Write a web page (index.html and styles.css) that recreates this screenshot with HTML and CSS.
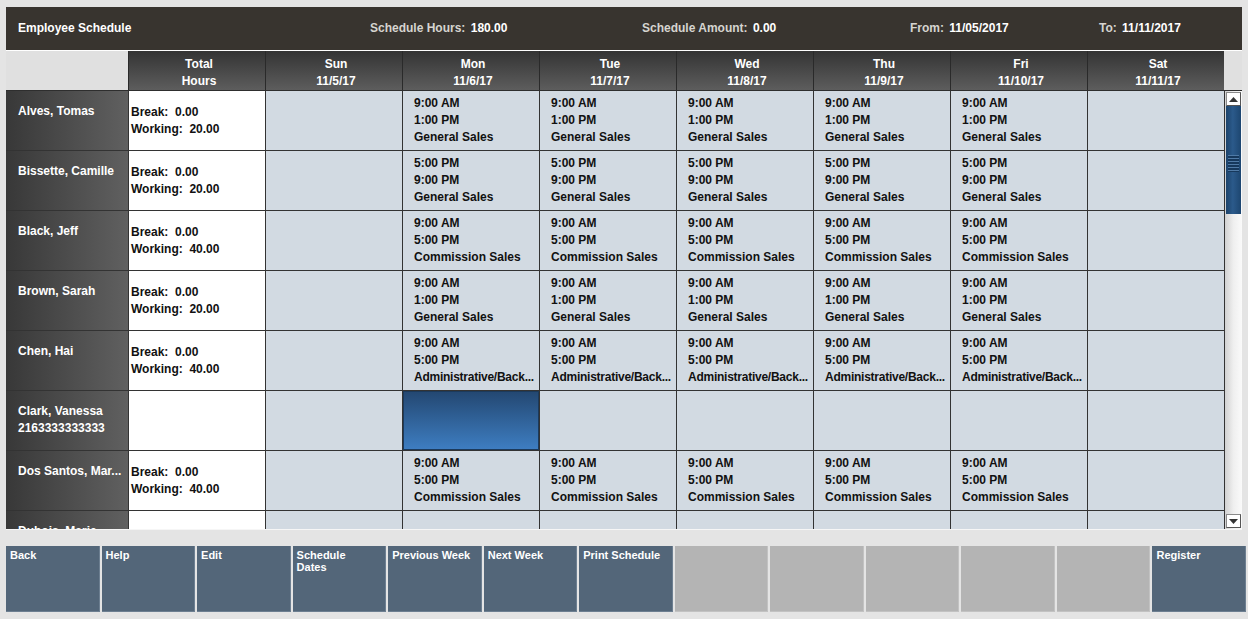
FILE: index.html
```html
<!DOCTYPE html>
<html>
<head>
  <title>Employee Schedule</title>
  <meta charset="UTF-8">
  <link rel="stylesheet" href="styles.css">
</head>
<body>
  <div class="screen">
    <div class="topbar">
      <div class="title">Employee Schedule</div>
      <div><span class="label">Schedule Hours:</span> <span class="value">180.00</span></div>
      <div><span class="label">Schedule Amount:</span> <span class="value">0.00</span></div>
      <div><span class="label">From:</span> <span class="value">11/05/2017</span></div>
      <div><span class="label">To:</span> <span class="value">11/11/2017</span></div>
    </div>

    <div class="grid">
      <div class="grid-head">
        <div class="corner"></div>
        <div class="colh">Total<br>Hours</div>
        <div class="colh">Sun<br>11/5/17</div>
        <div class="colh">Mon<br>11/6/17</div>
        <div class="colh">Tue<br>11/7/17</div>
        <div class="colh">Wed<br>11/8/17</div>
        <div class="colh">Thu<br>11/9/17</div>
        <div class="colh">Fri<br>11/10/17</div>
        <div class="colh">Sat<br>11/11/17</div>
        <div class="corner"></div>
      </div>

      <div class="grid-body">
        <div class="rows">
          <div class="row">
            <div class="name">Alves, Tomas</div>
            <div class="total"><div>Break:&nbsp; 0.00</div><div>Working:&nbsp; 20.00</div></div>
            <div class="day"></div>
            <div class="day"><div>9:00 AM</div><div>1:00 PM</div><div>General Sales</div></div>
            <div class="day"><div>9:00 AM</div><div>1:00 PM</div><div>General Sales</div></div>
            <div class="day"><div>9:00 AM</div><div>1:00 PM</div><div>General Sales</div></div>
            <div class="day"><div>9:00 AM</div><div>1:00 PM</div><div>General Sales</div></div>
            <div class="day"><div>9:00 AM</div><div>1:00 PM</div><div>General Sales</div></div>
            <div class="day"></div>
          </div>
          <div class="row">
            <div class="name">Bissette, Camille</div>
            <div class="total"><div>Break:&nbsp; 0.00</div><div>Working:&nbsp; 20.00</div></div>
            <div class="day"></div>
            <div class="day"><div>5:00 PM</div><div>9:00 PM</div><div>General Sales</div></div>
            <div class="day"><div>5:00 PM</div><div>9:00 PM</div><div>General Sales</div></div>
            <div class="day"><div>5:00 PM</div><div>9:00 PM</div><div>General Sales</div></div>
            <div class="day"><div>5:00 PM</div><div>9:00 PM</div><div>General Sales</div></div>
            <div class="day"><div>5:00 PM</div><div>9:00 PM</div><div>General Sales</div></div>
            <div class="day"></div>
          </div>
          <div class="row">
            <div class="name">Black, Jeff</div>
            <div class="total"><div>Break:&nbsp; 0.00</div><div>Working:&nbsp; 40.00</div></div>
            <div class="day"></div>
            <div class="day"><div>9:00 AM</div><div>5:00 PM</div><div>Commission Sales</div></div>
            <div class="day"><div>9:00 AM</div><div>5:00 PM</div><div>Commission Sales</div></div>
            <div class="day"><div>9:00 AM</div><div>5:00 PM</div><div>Commission Sales</div></div>
            <div class="day"><div>9:00 AM</div><div>5:00 PM</div><div>Commission Sales</div></div>
            <div class="day"><div>9:00 AM</div><div>5:00 PM</div><div>Commission Sales</div></div>
            <div class="day"></div>
          </div>
          <div class="row">
            <div class="name">Brown, Sarah</div>
            <div class="total"><div>Break:&nbsp; 0.00</div><div>Working:&nbsp; 20.00</div></div>
            <div class="day"></div>
            <div class="day"><div>9:00 AM</div><div>1:00 PM</div><div>General Sales</div></div>
            <div class="day"><div>9:00 AM</div><div>1:00 PM</div><div>General Sales</div></div>
            <div class="day"><div>9:00 AM</div><div>1:00 PM</div><div>General Sales</div></div>
            <div class="day"><div>9:00 AM</div><div>1:00 PM</div><div>General Sales</div></div>
            <div class="day"><div>9:00 AM</div><div>1:00 PM</div><div>General Sales</div></div>
            <div class="day"></div>
          </div>
          <div class="row">
            <div class="name">Chen, Hai</div>
            <div class="total"><div>Break:&nbsp; 0.00</div><div>Working:&nbsp; 40.00</div></div>
            <div class="day"></div>
            <div class="day"><div>9:00 AM</div><div>5:00 PM</div><div class="long">Administrative/Back...</div></div>
            <div class="day"><div>9:00 AM</div><div>5:00 PM</div><div class="long">Administrative/Back...</div></div>
            <div class="day"><div>9:00 AM</div><div>5:00 PM</div><div class="long">Administrative/Back...</div></div>
            <div class="day"><div>9:00 AM</div><div>5:00 PM</div><div class="long">Administrative/Back...</div></div>
            <div class="day"><div>9:00 AM</div><div>5:00 PM</div><div class="long">Administrative/Back...</div></div>
            <div class="day"></div>
          </div>
          <div class="row">
            <div class="name">Clark, Vanessa<br>2163333333333</div>
            <div class="total"></div>
            <div class="day"></div>
            <div class="day sel"></div>
            <div class="day"></div>
            <div class="day"></div>
            <div class="day"></div>
            <div class="day"></div>
            <div class="day"></div>
          </div>
          <div class="row">
            <div class="name">Dos Santos, Mar...</div>
            <div class="total"><div>Break:&nbsp; 0.00</div><div>Working:&nbsp; 40.00</div></div>
            <div class="day"></div>
            <div class="day"><div>9:00 AM</div><div>5:00 PM</div><div>Commission Sales</div></div>
            <div class="day"><div>9:00 AM</div><div>5:00 PM</div><div>Commission Sales</div></div>
            <div class="day"><div>9:00 AM</div><div>5:00 PM</div><div>Commission Sales</div></div>
            <div class="day"><div>9:00 AM</div><div>5:00 PM</div><div>Commission Sales</div></div>
            <div class="day"><div>9:00 AM</div><div>5:00 PM</div><div>Commission Sales</div></div>
            <div class="day"></div>
          </div>
          <div class="row">
            <div class="name">Dubois, Marie</div>
            <div class="total"></div>
            <div class="day"></div>
            <div class="day"></div>
            <div class="day"></div>
            <div class="day"></div>
            <div class="day"></div>
            <div class="day"></div>
            <div class="day"></div>
          </div>
        </div>

        <div class="scroll">
          <div class="arrow">
            <svg width="9" height="5" viewBox="0 0 9 5"><path d="M0 5 L4.5 0 L9 5 Z" fill="#333"/></svg>
          </div>
          <div class="thumb"><div class="grip"></div></div>
          <div class="track"></div>
          <div class="arrow">
            <svg width="9" height="5" viewBox="0 0 9 5"><path d="M0 0 L9 0 L4.5 5 Z" fill="#333"/></svg>
          </div>
        </div>
      </div>
    </div>

    <div class="buttons">
      <div class="btn">Back</div>
      <div class="btn">Help</div>
      <div class="btn">Edit</div>
      <div class="btn">Schedule<br>Dates</div>
      <div class="btn">Previous Week</div>
      <div class="btn">Next Week</div>
      <div class="btn">Print Schedule</div>
      <div class="btn off"></div>
      <div class="btn off"></div>
      <div class="btn off"></div>
      <div class="btn off"></div>
      <div class="btn off"></div>
      <div class="btn">Register</div>
    </div>
  </div>
</body>
</html>
```

FILE: styles.css
```css
body { margin: 0; background: #e4e4e4; font-family: "Liberation Sans", Arial, sans-serif; font-size: 12px; font-weight: bold; }
.screen { padding: 7px 2px 0 6px; }

.topbar { width: 1236px; height: 43px; box-sizing: border-box; padding: 0 0 2px 12px; background: #38342f; color: #fff; display: grid; grid-template-columns: 352px 272px 268px 189px 1fr; align-items: center; }
.topbar .label { color: #d6d4d0; margin-right: 2px; }
.topbar .value { color: #fff; }

.grid { width: 1236px; border-bottom: 1px solid #f6f6f6; }
.grid-head { display: grid; grid-template-columns: 122px repeat(8, 137px) 18px; height: 41px; box-sizing: border-box; border-top: 1px solid #fff; border-bottom: 1px solid #2e2e2e; }
.corner { background: #e0e0e0; }
.colh { background: linear-gradient(#343434, #5d5d5d); border-left: 1px solid #2a2a2a; color: #fff; text-align: center; line-height: 17px; padding: 5px 0 0 4px; }

.grid-body { display: flex; height: 438px; }
.rows { width: 1218px; height: 438px; overflow: hidden; }
.row { display: grid; grid-template-columns: 122px repeat(8, 137px); height: 60px; }
.row > div { box-sizing: border-box; border-bottom: 1px solid #333; }

.name { background: linear-gradient(90deg, #383838, #606060); color: #fff; padding: 12px 0 0 12px; line-height: 17px; white-space: nowrap; overflow: hidden; }
.total { background: #fff; border-left: 1px solid #333; padding-left: 2px; color: #111; line-height: 17px; display: flex; flex-direction: column; justify-content: center; }
.day { background: #d2dae2; border-left: 1px solid #333; padding: 0 0 0 11px; color: #111; line-height: 17px; display: flex; flex-direction: column; justify-content: center; min-width: 0; overflow: hidden; }
.day > div { white-space: nowrap; }
.day .long { letter-spacing: -0.25px; }
.day.sel { background: linear-gradient(#234771, #3e7ec2); box-shadow: inset 0 0 0 1px #1c3a5b; }

.scroll { width: 18px; box-sizing: border-box; border-left: 1px solid #333; padding: 1px; display: flex; flex-direction: column; background: linear-gradient(90deg, #d2d2d2, #efefef 50%, #fafafa); }
.arrow { height: 14px; background: #fff; box-sizing: border-box; border: 1px solid #8a8a8a; border-right-color: #555; border-bottom-color: #555; display: flex; align-items: center; justify-content: center; }
.thumb { height: 108px; background: linear-gradient(90deg, #1c436b, #2b5a8b 45%, #1d4670); display: flex; align-items: center; justify-content: center; }
.grip { width: 11px; height: 17px; margin-top: 6px; background: repeating-linear-gradient(#4f7aa6 0 1px, #16385c 1px 3px); }
.track { flex: 1; }

.buttons { display: grid; grid-template-columns: repeat(13, 1fr); gap: 2px; height: 66px; margin-top: 16px; }
.btn { background: #536679; color: #fff; font-size: 11px; line-height: 12px; padding: 3px 4px; border-right: 1px solid #6d7f91; border-bottom: 1px solid #6d7f91; }
.btn.off { background: #b4b4b4; border-color: #c2c2c2; }
```
